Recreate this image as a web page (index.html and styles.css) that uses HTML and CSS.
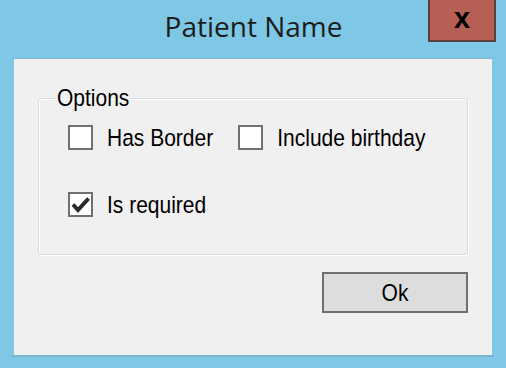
FILE: index.html
```html
<!DOCTYPE html>
<html>
<head>
<meta charset="utf-8">
<link rel="stylesheet" href="styles.css">
</head>
<body>
<div class="window">
  <div class="titlebar">
    <div class="title">Patient Name</div>
    <div class="close">x</div>
  </div>
  <div class="client">
    <fieldset class="group">
      <legend class="legend"><span class="txt">Options</span></legend>
      <div class="row">
        <label class="check"><span class="box"></span><span class="txt">Has Border</span></label>
        <label class="check"><span class="box"></span><span class="txt">Include birthday</span></label>
      </div>
      <div class="row row2">
        <label class="check"><span class="box"><svg viewBox="0 0 21 21" width="21" height="21"><path d="M3 10.5 L8 16 L18.5 4.5" fill="none" stroke="#2b2b2b" stroke-width="4" stroke-linejoin="miter" stroke-linecap="butt"/></svg></span><span class="txt">Is required</span></label>
      </div>
    </fieldset>
    <div class="actions">
      <div class="btn"><span class="txt">Ok</span></div>
    </div>
  </div>
  <div class="shadow"></div>
</div>
</body>
</html>
```
FILE: styles.css
```css
html, body {
  margin: 0;
  padding: 0;
  background: #7ec8e6;
  width: 506px;
  height: 368px;
  overflow: hidden;
}
.window {
  display: flex;
  flex-direction: column;
}
.titlebar {
  display: grid;
  grid-template-columns: 1fr auto 1fr;
  height: 58px;
  align-items: start;
}
.title {
  grid-column: 2;
  font-family: "Open Sans", sans-serif;
  font-size: 28px;
  color: #1c1c1c;
  padding-top: 7px;
  line-height: 38px;
  padding-left: 1px;
}
.close {
  grid-column: 3;
  justify-self: end;
  margin-right: 10px;
  width: 64px;
  height: 40px;
  background: #b85f55;
  border: 2px solid #5b3f3d;
  border-top: none;
  font-family: "Liberation Sans", Arial, sans-serif;
  font-weight: bold;
  font-size: 29px;
  line-height: 37px;
  text-align: center;
  color: #000;
}
.client {
  margin-left: 14px;
  width: 478px;
  height: 297px;
  background: #f0f0f0;
  border-top: 1px solid #8cb3cc;
  box-sizing: border-box;
  display: flex;
  flex-direction: column;
  padding: 0 24px 0 24px;
}
.shadow {
  margin-left: 12px;
  width: 482px;
  height: 2px;
  background: #7ab5d0;
}
.txt {
  display: inline-block;
  font-family: "Liberation Sans", Arial, sans-serif;
  font-size: 21px;
  line-height: 20px;
  color: #000;
  white-space: nowrap;
  transform: scaleY(1.18);
}
.group {
  margin: 29px 0 0 0;
  padding: 0;
  height: 167px;
  box-sizing: border-box;
  border: 1px solid #d3dde3;
  border-radius: 3px;
  box-shadow: inset 1px 1px 0 #fff, 1px 1px 0 #fff;
  min-width: 0;
}
.legend {
  padding: 0 2px 0 2px;
  margin-left: 16px;
  line-height: 20px;
  height: 20px;
}
.row {
  display: flex;
  gap: 25px;
  margin-top: 17px;
  padding-left: 29px;
}
.row2 {
  margin-top: 42px;
}
.check {
  display: flex;
  align-items: center;
  gap: 14px;
}
.box {
  width: 21px;
  height: 21px;
  border: 2px solid #707070;
  background: #fff;
  display: block;
  flex: none;
}
.box svg {
  display: block;
}
.actions {
  display: flex;
  justify-content: flex-end;
  margin-top: 17px;
}
.btn {
  width: 142px;
  height: 37px;
  border: 2px solid #707070;
  background: #dddddd;
  display: flex;
  align-items: center;
  justify-content: center;
}
```
